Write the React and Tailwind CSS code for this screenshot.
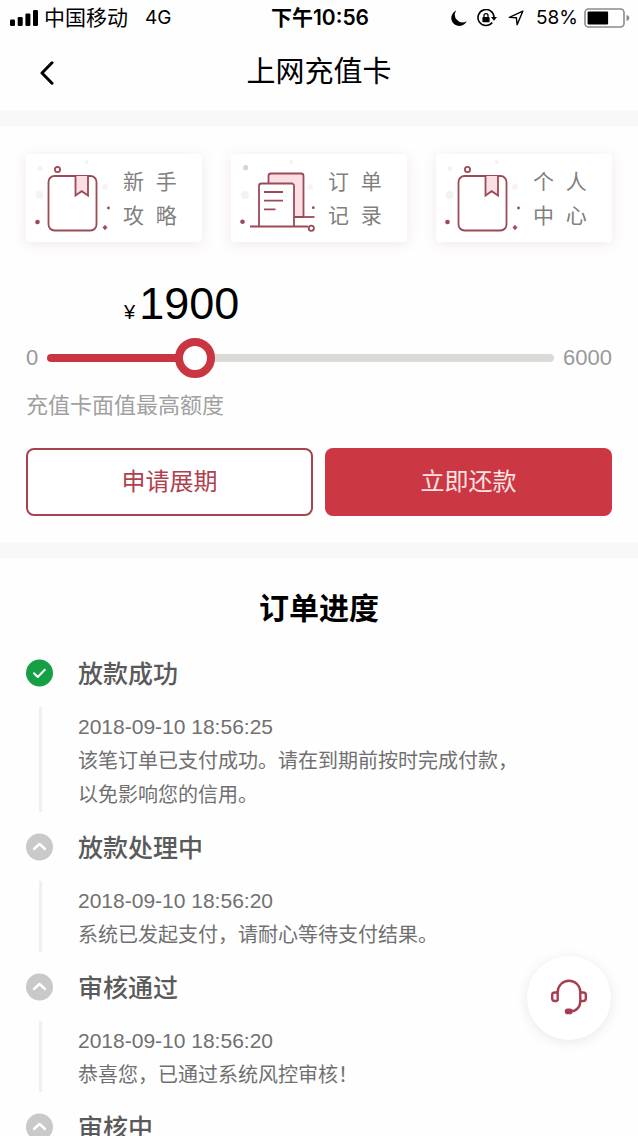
import React, { useState } from 'react';

const MIN_AMOUNT = 350;
const MAX_AMOUNT = 6000;

// full-width punctuation
const steps = [
  {
    id: 'paid',
    title: '放款成功',
    time: '2018-09-10 18:56:25',
    lines: ['该笔订单已支付成功。请在到期前按时完成付款\uFF0C', '以免影响您的信用。'],
    done: true,
  },
  {
    id: 'paying',
    title: '放款处理中',
    time: '2018-09-10 18:56:20',
    lines: ['系统已发起支付\uFF0C请耐心等待支付结果。'],
  },
  {
    id: 'approved',
    title: '审核通过',
    time: '2018-09-10 18:56:20',
    lines: ['恭喜您\uFF0C已通过系统风控审核\uFF01'],
  },
  {
    id: 'reviewing',
    title: '审核中',
    lines: [],
  },
];

const BookIcon = () => (
  <svg className="w-20 h-[76px] shrink-0" viewBox="0 0 80 76" fill="none" stroke="#9c4a56" strokeWidth="1.8">
    <g stroke="none">
      <circle cx="8" cy="8.5" r="2.5" fill="#f2f2f2" />
      <circle cx="7.5" cy="35" r="4" fill="#f4f2f2" />
      <circle cx="54.5" cy="2" r="2" fill="#f4f2f2" />
      <circle cx="73" cy="27" r="3" fill="#fcf0f2" />
    </g>
    <rect x="16.5" y="16" width="48" height="54.5" rx="6" />
    <path d="M43.5 16v19.5l6.2-4.3 6.3 4.3V16" fill="#fbdfe4" />
    <circle cx="25.5" cy="9.5" r="2.6" />
    <circle cx="5.5" cy="62" r="1.4" fill="#9c4a56" />
    <circle cx="76.5" cy="48" r="0.8" strokeWidth="1.2" fill="#9c4a56" />
    <path d="M73 65.3v4.4M70.8 67.5h4.4" />
  </svg>
);

const RecordIcon = () => (
  <svg className="w-20 h-[76px] shrink-0" viewBox="0 0 80 76" fill="none" stroke="#9c4a56" strokeWidth="1.8">
    <g stroke="none">
      <circle cx="8.7" cy="7.7" r="2.6" fill="#d8d5d7" />
      <circle cx="8" cy="35" r="4" fill="#f4f2f2" />
      <circle cx="54.5" cy="2" r="2" fill="#f4f2f2" />
      <circle cx="73" cy="27" r="3" fill="#fcf0f2" />
    </g>
    <path d="M31.5 23.5v-7.5a2.5 2.5 0 0 1 2.5-2.5h30a2.5 2.5 0 0 1 2.5 2.5v41H57" fill="#fbdfe4" />
    <path d="M57 57h20.5" />
    <path d="M22 66.5V26a2.5 2.5 0 0 1 2.5-2.5h30A2.5 2.5 0 0 1 57 26v40.5" fill="#fff" />
    <path d="M27 32h19M27 40.7h19M27 49.3h11.5M13 66.5h58" />
    <circle cx="74.3" cy="68.3" r="2.6" fill="#fff" />
    <circle cx="5.5" cy="61.7" r="1.4" fill="#9c4a56" />
    <circle cx="76.3" cy="47.7" r="0.8" strokeWidth="1.2" fill="#9c4a56" />
  </svg>
);

const shortcuts = [
  { id: 'guide', rows: ['新  手', '攻  略'], Icon: BookIcon },
  { id: 'orders', rows: ['订  单', '记  录'], Icon: RecordIcon },
  { id: 'profile', rows: ['个  人', '中  心'], Icon: BookIcon },
];

const StatusBar = () => (
  <div className="grid grid-cols-[1fr_auto_1fr] items-center shrink-0 h-9 pl-[10px] pr-2 text-black">
    <div className="flex items-center">
      <svg className="w-7 h-4 mr-[6px]" viewBox="0 0 28 16" fill="#000">
        <rect x="0" y="9.5" width="5" height="6.5" rx="1.2" />
        <rect x="7.7" y="7" width="5" height="9" rx="1.2" />
        <rect x="15.4" y="3.5" width="5" height="12.5" rx="1.2" />
        <rect x="23" y="0" width="5" height="16" rx="1.2" />
      </svg>
      <span className="text-[21px]">中国移动</span>
      <span className="ml-[17px] text-[19px] font-['Inter','Noto_Sans_CJK_SC',sans-serif]">4G</span>
    </div>
    <div className="text-[21px] font-semibold font-['Inter','Noto_Sans_CJK_SC',sans-serif]">下午10:56</div>
    <div className="flex items-center justify-end">
      <svg className="w-4 h-4 mr-[10px]" viewBox="0 0 16 16" fill="#000">
        <path d="M5.2 0.6A8 8 0 1 0 15.6 11.2 7.6 7.6 0 0 1 5.2 0.6z" />
      </svg>
      <svg className="w-5 h-[18px] mr-[11px]" viewBox="0 0 20 18" fill="none" stroke="#000" strokeWidth="1.6">
        <path d="M15.2 13.6A8 8 0 1 1 17 8.2" />
        <path d="M14 8h6l-3 3.8z" fill="#000" stroke="none" />
        <rect x="5.4" y="8" width="7.2" height="5.2" rx="0.8" fill="#000" stroke="none" />
        <path d="M7 8.4V6.7a2 2 0 0 1 4 0v1.7" strokeWidth="1.3" />
      </svg>
      <svg className="w-4 h-4 mr-[12px]" viewBox="0 0 16 16" fill="none" stroke="#000" strokeWidth="1.4" strokeLinejoin="round">
        <path d="M14.8 1.2 1.4 7.4l7 .4.7 7z" />
      </svg>
      <span className="mr-[6px] text-[19px] font-['Inter',sans-serif]">58%</span>
      <svg className="w-[46px] h-5" viewBox="0 0 46 20" fill="none">
        <rect x="1" y="1" width="39" height="18" rx="3.5" stroke="#8a8a8a" strokeWidth="1.6" />
        <rect x="3.6" y="3.6" width="20.5" height="12.8" rx="1" fill="#000" />
        <path d="M42.5 7v6c2-.6 2.8-1.6 2.8-3s-.8-2.4-2.8-3z" fill="#8a8a8a" />
      </svg>
    </div>
  </div>
);

const StepIcon = ({ done }) => (
  <svg className="size-7" viewBox="0 0 28 28" fill="none" strokeLinecap="round" strokeLinejoin="round">
    <circle cx="13.5" cy="14" r="13.5" fill={done ? '#15a045' : '#c9c9c9'} />
    {done ? (
      <path d="M8 14.2l3.8 3.8 7-7.2" stroke="#fff" strokeWidth="2" />
    ) : (
      <path d="M8 16l5.5-5 5.5 5" stroke="#fff" strokeWidth="2.4" />
    )}
  </svg>
);

const App = () => {
  const [amount, setAmount] = useState(1900);
  const fill = ((amount - MIN_AMOUNT) / (MAX_AMOUNT - MIN_AMOUNT)) * 100;

  return (
    <div className="flex flex-col h-screen overflow-hidden bg-[#fefefe] font-['Liberation_Sans','Noto_Sans_CJK_SC',sans-serif]">
      <StatusBar />

      {/* Title bar */}
      <header className="grid grid-cols-[1fr_auto_1fr] items-center shrink-0 h-[74px] px-[26px]">
        <button type="button" aria-label="返回" className="justify-self-start px-[14px] py-2">
          <svg className="w-[14px] h-6" viewBox="0 0 14 24" fill="none" stroke="#000" strokeWidth="3" strokeLinecap="round" strokeLinejoin="round">
            <path d="M12 1.8 2 12l10 10.2" />
          </svg>
        </button>
        <h1 className="text-[29px] text-black">上网充值卡</h1>
      </header>

      <div className="shrink-0 h-4 bg-[#f8f8f8]" />

      {/* Shortcuts */}
      <nav className="grid grid-cols-3 gap-[29px] shrink-0 px-[26px] pt-7">
        {shortcuts.map(({ id, rows, Icon }) => (
          <button
            key={id}
            type="button"
            className="flex items-center gap-[11px] h-[88px] pl-[6px] bg-white rounded-sm shadow-[0_2px_14px_rgba(150,70,50,0.12)]"
          >
            <Icon />
            <span className="flex flex-col pt-[2px] text-left text-[21px] leading-[34px] text-[#808080]">
              {rows.map(row => (
                <span key={row} className="whitespace-pre">{row}</span>
              ))}
            </span>
          </button>
        ))}
      </nav>

      {/* Amount */}
      <section className="shrink-0 px-[26px] pt-9 pb-[26px]">
        <div className="flex items-baseline gap-1 pl-[98px] leading-[52px] text-black">
          <span className="text-[20px]">¥</span>
          <span className="text-[45px]">{amount}</span>
        </div>
        <div className="flex items-center gap-[9px] text-[22px] leading-10 text-[#999]">
          <span>0</span>
          <input
            type="range"
            aria-label="充值卡面值"
            min={MIN_AMOUNT}
            max={MAX_AMOUNT}
            step={50}
            value={amount}
            onChange={e => setAmount(Number(e.target.value))}
            style={{ '--fill': `${fill}%` }}
            className="flex-1 min-w-0 h-10 appearance-none bg-transparent [&::-webkit-slider-runnable-track]:h-2 [&::-webkit-slider-runnable-track]:rounded-full [&::-webkit-slider-runnable-track]:bg-[linear-gradient(to_right,#c93540_var(--fill),#dadad6_var(--fill))] [&::-webkit-slider-thumb]:appearance-none [&::-webkit-slider-thumb]:size-10 [&::-webkit-slider-thumb]:-mt-4 [&::-webkit-slider-thumb]:rounded-full [&::-webkit-slider-thumb]:border-8 [&::-webkit-slider-thumb]:border-[#c93540] [&::-webkit-slider-thumb]:bg-white"
          />
          <span>6000</span>
        </div>
        <p className="mt-3 text-[22px] leading-8 text-[#a0a0a0]">充值卡面值最高额度</p>
        <div className="grid grid-cols-2 gap-3 mt-[26px] text-[24px]">
          <button type="button" className="h-[68px] rounded-lg border-2 border-[#a8434e] bg-white text-[#b0404e]">
            申请展期
          </button>
          <button type="button" className="h-[68px] rounded-lg bg-[#cb3742] text-[#fbe3e3]">
            立即还款
          </button>
        </div>
      </section>

      <div className="shrink-0 h-4 bg-[#f8f8f8]" />

      {/* Order progress */}
      <section className="flex-1 min-h-0 overflow-hidden px-[26px] pt-7">
        <h2 className="text-center text-[30px] leading-[46px] font-bold text-black">订单进度</h2>
        <ol className="mt-[22px]">
          {steps.map(step => (
            <li key={step.id} className="flex gap-6">
              <div className="flex flex-col items-center shrink-0 pt-[5px]">
                <StepIcon done={step.done} />
                <div className="flex-1 w-[3px] mt-5 mb-4 bg-[#f0f0f0]" />
              </div>
              <div className="pb-4">
                <h3 className="text-[25px] leading-10 font-medium text-[#5a5a5a]">{step.title}</h3>
                <div className="mt-4 text-[20px] leading-[34px] text-[#707070]">
                  {step.time && <time className="block text-[21px] leading-[34px]">{step.time}</time>}
                  {step.lines.map(line => (
                    <p key={line}>{line}</p>
                  ))}
                </div>
              </div>
            </li>
          ))}
        </ol>
      </section>

      {/* Customer service */}
      <button
        type="button"
        aria-label="联系客服"
        className="fixed right-[27px] bottom-24 flex items-center justify-center size-[84px] rounded-full bg-white shadow-[0_2px_12px_rgba(90,70,60,0.12)]"
      >
        <svg className="size-10" viewBox="0 0 40 40" fill="none" stroke="#a83c50" strokeWidth="2.4" strokeLinejoin="round">
          <path d="M8.7 23V14a11.3 11.3 0 0 1 22.6 0v9c0 6-4 10.3-9.5 10.3" />
          <path d="M8.7 14.5H5.7a2.5 2.5 0 0 0-2.5 2.5v3.5A2.5 2.5 0 0 0 5.7 23h3" />
          <path d="M31.3 14.5h3a2.5 2.5 0 0 1 2.5 2.5v3.5a2.5 2.5 0 0 1-2.5 2.5h-3" />
          <rect x="17" y="31.8" width="5.5" height="3.2" rx="1.6" fill="#a83c50" />
        </svg>
      </button>
    </div>
  );
};

export default App;
